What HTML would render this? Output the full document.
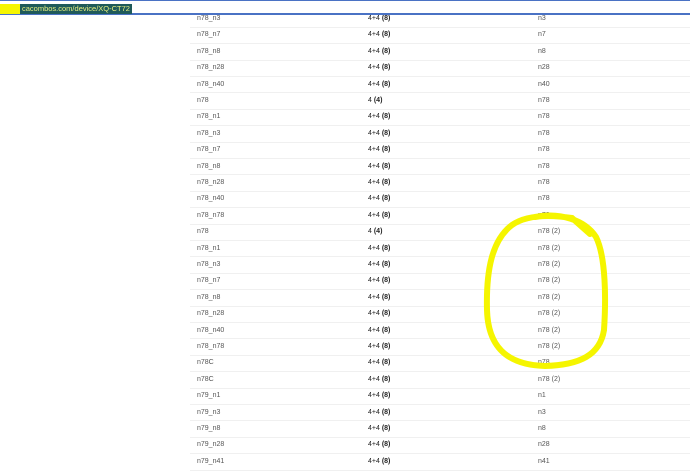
<!DOCTYPE html>
<html><head><style>
body{margin:0;width:690px;height:467px;overflow:hidden;background:#fff;font-family:"Liberation Sans",sans-serif;position:relative}
.top{position:absolute;left:0;top:0;width:690px;height:15px;background:#fff;border-top:1px solid #4a72c4;border-bottom:2px solid #4a72c4;box-sizing:border-box;z-index:2}
.hl{position:absolute;left:0;top:3px;width:110px;height:10px;background:#f5f500}
.url{position:absolute;left:20px;top:3px;height:10px;background:#1f5a5a;color:#e8f080;font-size:7.5px;line-height:10px;padding:0 2px}
.row{position:absolute;left:190px;width:500px;height:16.4px;border-bottom:1px solid #f0f0f0;font-size:7px;color:#555;box-sizing:border-box}
.row span{position:absolute;top:3.5px}
.a{left:7px}.b{left:178px;color:#222}.c{left:348px}
svg{position:absolute;left:0;top:0}
</style></head><body>
<div class="top"><div class="hl"></div><div class="url">cacombos.com/device/XQ-CT72</div></div>
<div id="t"></div>
<script>
var r=[["n78_n3","4+4 (8)","n3"],["n78_n7","4+4 (8)","n7"],["n78_n8","4+4 (8)","n8"],["n78_n28","4+4 (8)","n28"],["n78_n40","4+4 (8)","n40"],["n78","4 (4)","n78"],["n78_n1","4+4 (8)","n78"],["n78_n3","4+4 (8)","n78"],["n78_n7","4+4 (8)","n78"],["n78_n8","4+4 (8)","n78"],["n78_n28","4+4 (8)","n78"],["n78_n40","4+4 (8)","n78"],["n78_n78","4+4 (8)","n78"],["n78","4 (4)","n78 (2)"],["n78_n1","4+4 (8)","n78 (2)"],["n78_n3","4+4 (8)","n78 (2)"],["n78_n7","4+4 (8)","n78 (2)"],["n78_n8","4+4 (8)","n78 (2)"],["n78_n28","4+4 (8)","n78 (2)"],["n78_n40","4+4 (8)","n78 (2)"],["n78_n78","4+4 (8)","n78 (2)"],["n78C","4+4 (8)","n78"],["n78C","4+4 (8)","n78 (2)"],["n79_n1","4+4 (8)","n1"],["n79_n3","4+4 (8)","n3"],["n79_n8","4+4 (8)","n8"],["n79_n28","4+4 (8)","n28"],["n79_n41","4+4 (8)","n41"]];
var h="";r.forEach(function(x,i){var y=11.5+i*16.4;var b=x[1].replace(/\((\d)\)/,"<b>($1)</b>");h+='<div class="row" style="top:'+y+'px"><span class="a">'+x[0]+'</span><span class="b">'+b+'</span><span class="c">'+x[2]+'</span></div>';});
document.getElementById("t").innerHTML=h;
</script>
<svg width="690" height="467"><path d="M535 217 C560 212 585 220 596 237 C606 257 606 300 604 330 C600 355 580 365 545 366 C505 365 488 345 487 310 C486 270 492 240 512 225 C525 216 545 214 572 218 L590 234" fill="none" stroke="#f5f500" stroke-width="6" stroke-linecap="round"/></svg>
</body></html>
